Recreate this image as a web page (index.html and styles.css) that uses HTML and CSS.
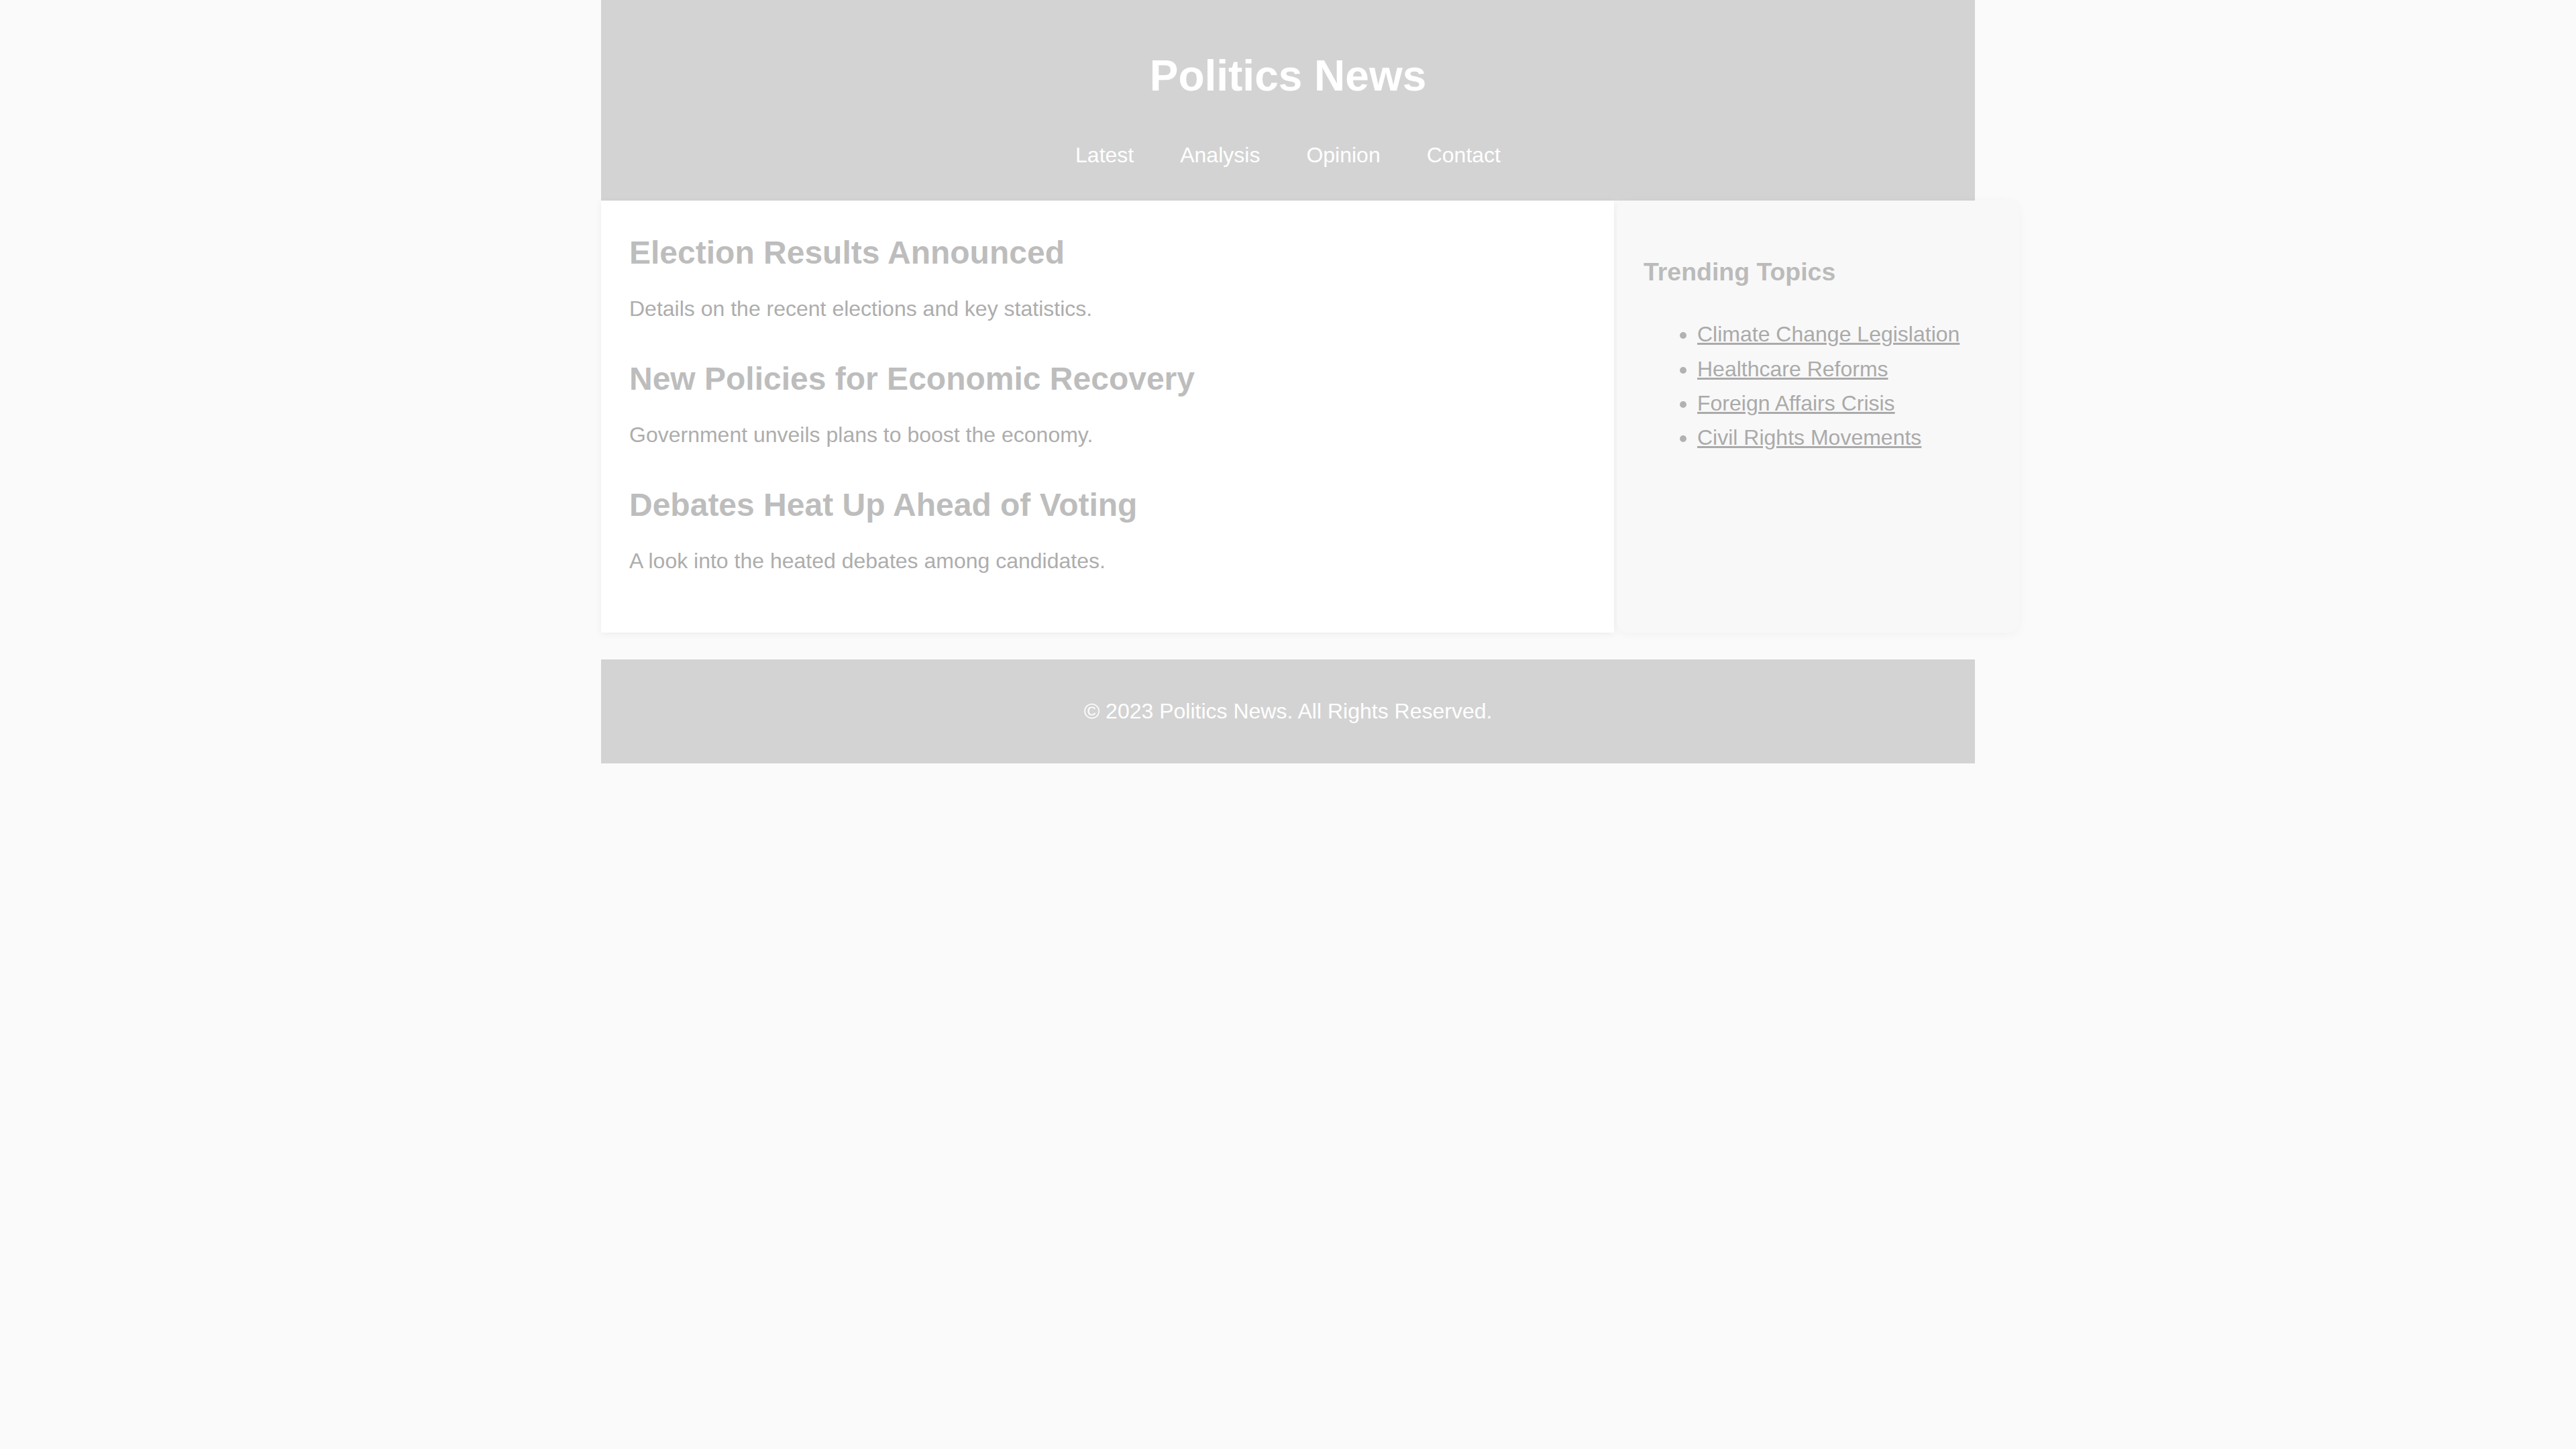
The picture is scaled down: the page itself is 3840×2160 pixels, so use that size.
FILE: index.html
```html
<!DOCTYPE html>
<html lang="en">
<head>
<meta charset="utf-8">
<title>Politics News</title>
<link rel="stylesheet" href="styles.css">
</head>
<body>
<div class="page">
  <header class="site-header">
    <h1 class="site-title">Politics News</h1>
    <nav>
      <ul class="nav">
        <li><a href="#">Latest</a></li>
        <li><a href="#">Analysis</a></li>
        <li><a href="#">Opinion</a></li>
        <li><a href="#">Contact</a></li>
      </ul>
    </nav>
  </header>
  <div class="layout">
    <main class="articles">
      <article class="story">
        <h2>Election Results Announced</h2>
        <p>Details on the recent elections and key statistics.</p>
      </article>
      <article class="story">
        <h2>New Policies for Economic Recovery</h2>
        <p>Government unveils plans to boost the economy.</p>
      </article>
      <article class="story">
        <h2>Debates Heat Up Ahead of Voting</h2>
        <p>A look into the heated debates among candidates.</p>
      </article>
    </main>
    <aside class="sidebar">
      <h3>Trending Topics</h3>
      <ul class="topics">
        <li><a href="#">Climate Change Legislation</a></li>
        <li><a href="#">Healthcare Reforms</a></li>
        <li><a href="#">Foreign Affairs Crisis</a></li>
        <li><a href="#">Civil Rights Movements</a></li>
      </ul>
    </aside>
  </div>
  <footer class="site-footer">
    <p>&copy; 2023 Politics News. All Rights Reserved.</p>
  </footer>
</div>
</body>
</html>
```

FILE: styles.css
```css
* {
  box-sizing: border-box;
}

body {
  margin: 0;
  background: #fafafa;
  font-family: "Liberation Sans", Arial, sans-serif;
  font-size: 32px;
  line-height: 1.6;
}

.page {
  width: 2048px;
  margin: 0 auto;
}

.site-header {
  background: #d3d3d3;
  color: #ffffff;
  text-align: center;
  padding: 20px 0 41px;
}

.site-title {
  font-size: 64px;
  font-weight: bold;
  margin: 42px 0;
}

.nav {
  list-style: none;
  margin: 0;
  padding: 0;
  display: flex;
  justify-content: center;
  gap: 69px;
}

.nav a {
  color: #ffffff;
  text-decoration: none;
}

.layout {
  display: flex;
  align-items: stretch;
}

.articles {
  width: 1510px;
  flex: 0 0 1510px;
  background: #ffffff;
  padding: 40px 42px;
  box-shadow: 0 2px 10px rgba(0, 0, 0, 0.06);
}

.story {
  margin-bottom: 40px;
}

.story h2 {
  font-size: 48px;
  margin: 0 0 20px;
  color: #bdbdbd;
}

.story p {
  margin: 0;
  color: #adadad;
}

.sidebar {
  width: 600px;
  flex: 0 0 600px;
  margin-left: 4px;
  padding: 40px;
  background: #f8f8f8;
  border-radius: 16px;
  box-shadow: 0 2px 14px rgba(0, 0, 0, 0.04);
}

.sidebar h3 {
  font-size: 37.44px;
  margin: 37.44px 0;
  color: #bbbbbb;
}

.topics {
  margin: 32px 0;
  padding-left: 80px;
  color: #b2b2b2;
}

.topics a {
  color: #aaaaaa;
  text-decoration: underline;
}

.site-footer {
  margin-top: 40px;
  background: #d3d3d3;
  color: #ffffff;
  text-align: center;
  padding: 52px 0;
}

.site-footer p {
  margin: 0;
}
```
